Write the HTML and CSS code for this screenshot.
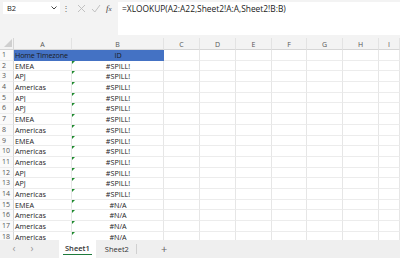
FILE: index.html
```html
<!DOCTYPE html>
<html lang="en">
<head>
  <meta charset="UTF-8">
  <title>Book1</title>
  <link rel="stylesheet" href="styles.css">
</head>
<body>
  <div class="app">
    <div class="fbar">
      <div class="namebox">
        <span>B2</span>
        <svg width="6" height="4" viewBox="0 0 6 4"><path d="M0.5 0.5 L3 3 L5.5 0.5" fill="none" stroke="#444" stroke-width="1"/></svg>
      </div>
      <div class="dots">&#8942;</div>
      <div class="fbtns">
        <svg width="9" height="9" viewBox="0 0 9 9"><path d="M1 1 L8 8 M8 1 L1 8" stroke="#bbb" stroke-width="0.9"/></svg>
        <svg width="10" height="9" viewBox="0 0 10 9"><path d="M1 5 L3.8 8 L9 1" fill="none" stroke="#bbb" stroke-width="0.9"/></svg>
        <span class="fx">f<i>x</i></span>
      </div>
      <div class="formula">=XLOOKUP(A2:A22,Sheet2!A:A,Sheet2!B:B)</div>
    </div>

    <div class="grid" id="grid">
      <div class="hdr corner"><svg width="8" height="8" viewBox="0 0 8 8"><path d="M8 0 L8 8 L0 8 Z" fill="#cfcfcf"/></svg></div>
      <div class="hdr">A</div>
      <div class="hdr">B</div>
      <div class="hdr">C</div>
      <div class="hdr">D</div>
      <div class="hdr">E</div>
      <div class="hdr">F</div>
      <div class="hdr">G</div>
      <div class="hdr">H</div>
      <div class="hdr">I</div>
    </div>

    <div class="tabs">
      <span class="nav">&#8249;</span>
      <span class="nav">&#8250;</span>
      <span class="tab active">Sheet1</span>
      <span class="tab">Sheet2</span>
      <span class="plus">+</span>
    </div>
  </div>

  <script>
    var rows = [
      ['Home Timezone', 'ID'],
      ['EMEA', '#SPILL!'], ['APJ', '#SPILL!'], ['Americas', '#SPILL!'],
      ['APJ', '#SPILL!'], ['APJ', '#SPILL!'], ['EMEA', '#SPILL!'],
      ['Americas', '#SPILL!'], ['EMEA', '#SPILL!'], ['Americas', '#SPILL!'],
      ['Americas', '#SPILL!'], ['APJ', '#SPILL!'], ['APJ', '#SPILL!'],
      ['Americas', '#SPILL!'], ['EMEA', '#N/A'], ['Americas', '#N/A'],
      ['Americas', '#N/A'], ['Americas', '#N/A']
    ];

    var grid = document.getElementById('grid');
    rows.forEach(function (r, i) {
      var html = '<div class="rn">' + (i + 1) + '</div>';
      if (i == 0) {
        html += '<div class="c head">' + r[0] + '</div><div class="c head mid">' + r[1] + '</div>';
      } else {
        html += '<div class="c">' + r[0] + '</div><div class="c mid err">' + r[1] + '</div>';
      }
      for (var k = 0; k < 7; k++) html += '<div class="c"></div>';
      grid.insertAdjacentHTML('beforeend', html);
    });
  </script>
</body>
</html>
```

FILE: styles.css
```css
body {
  margin: 0;
  background: #f3f3f3;
  font-family: "Open Sans", "Noto Sans", sans-serif;
  color: #222;
}

.app {
  width: 400px;
  height: 258px;
  display: flex;
  flex-direction: column;
  overflow: hidden;
}

.fbar {
  height: 38px;
  display: flex;
  align-items: flex-start;
  padding-top: 2px;
  box-sizing: border-box;
  flex-shrink: 0;
}

.namebox {
  margin-left: 3px;
  width: 57px;
  height: 12px;
  background: #fff;
  display: flex;
  align-items: center;
  justify-content: space-between;
  padding: 0 3px 0 4px;
  box-sizing: border-box;
  font-size: 7.5px;
}

.dots {
  width: 12px;
  text-align: center;
  font-size: 8px;
  line-height: 12px;
  color: #666;
}

.fbtns {
  display: flex;
  align-items: center;
  gap: 5px;
  height: 12px;
  padding-left: 5px;
  width: 38px;
}

.fx {
  font-family: "Liberation Serif", serif;
  font-style: italic;
  font-size: 9px;
  color: #444;
}

.fx i {
  font-size: 7px;
}

.formula {
  flex: 1;
  height: 33px;
  margin-left: 3px;
  background: #fff;
  font-size: 8.4px;
  padding: 2px 0 0 4px;
  box-sizing: border-box;
  line-height: 10px;
}

.grid {
  flex: 1;
  display: grid;
  grid-template-columns: 14px 58px 92px 36px 36px 36px 35px 36px 36px 21px;
  grid-template-rows: 12px;
  grid-auto-rows: 10.7px;
  background: #fff;
  overflow: hidden;
  font-size: 7.2px;
}

.hdr {
  background: #f3f3f3;
  border-bottom: 1px solid #d6d6d6;
  border-right: 1px solid #e3e3e3;
  color: #555;
  text-align: center;
  line-height: 13px;
  font-size: 7px;
}

.corner {
  display: flex;
  align-items: flex-end;
  justify-content: flex-end;
  padding: 0 1px 2px 0;
  border-right-color: #d6d6d6;
}

.rn {
  background: #fafafa;
  border-right: 1px solid #d6d6d6;
  border-bottom: 1px solid #ececec;
  color: #555;
  padding-left: 2px;
  line-height: 10px;
  font-size: 7px;
}

.c {
  border-right: 1px solid #e6e6e6;
  border-bottom: 1px solid #ececec;
  padding-left: 1px;
  line-height: 10px;
  white-space: nowrap;
  overflow: hidden;
  position: relative;
}

.mid {
  text-align: center;
}

.head {
  background: #4472c4;
  border-right-color: #4472c4;
  border-bottom-color: #4472c4;
  color: #1c1c1c;
  letter-spacing: -0.15px;
  overflow: visible;
}

.err::before {
  content: "";
  position: absolute;
  left: 0;
  top: 0;
  border-top: 3px solid #1e8a2e;
  border-right: 3px solid transparent;
}

.tabs {
  height: 18px;
  flex-shrink: 0;
  background: #efefef;
  display: flex;
  align-items: stretch;
  font-size: 7.5px;
  color: #333;
}

.nav {
  width: 18px;
  text-align: center;
  line-height: 17px;
  font-size: 10px;
  color: #999;
}

.nav:first-child {
  margin-left: 5px;
}

.tab {
  padding: 0 6px;
  line-height: 17px;
  margin-left: 5px;
}

.tab.active {
  margin-left: 18px;
  background: #fff;
  font-weight: 600;
  position: relative;
}

.tab.active::after {
  content: "";
  position: absolute;
  left: 4px;
  right: 4px;
  bottom: 3px;
  height: 1px;
  background: #1e7a3c;
}

.tab + .tab:not(.active) {
  border-right: 1px solid #d0d0d0;
  margin: 4px 0 4px 2px;
  line-height: 10px;
  padding: 0 7px 0 7px;
}

.plus {
  margin-left: 24px;
  line-height: 17px;
  font-size: 11px;
  color: #666;
}
```
